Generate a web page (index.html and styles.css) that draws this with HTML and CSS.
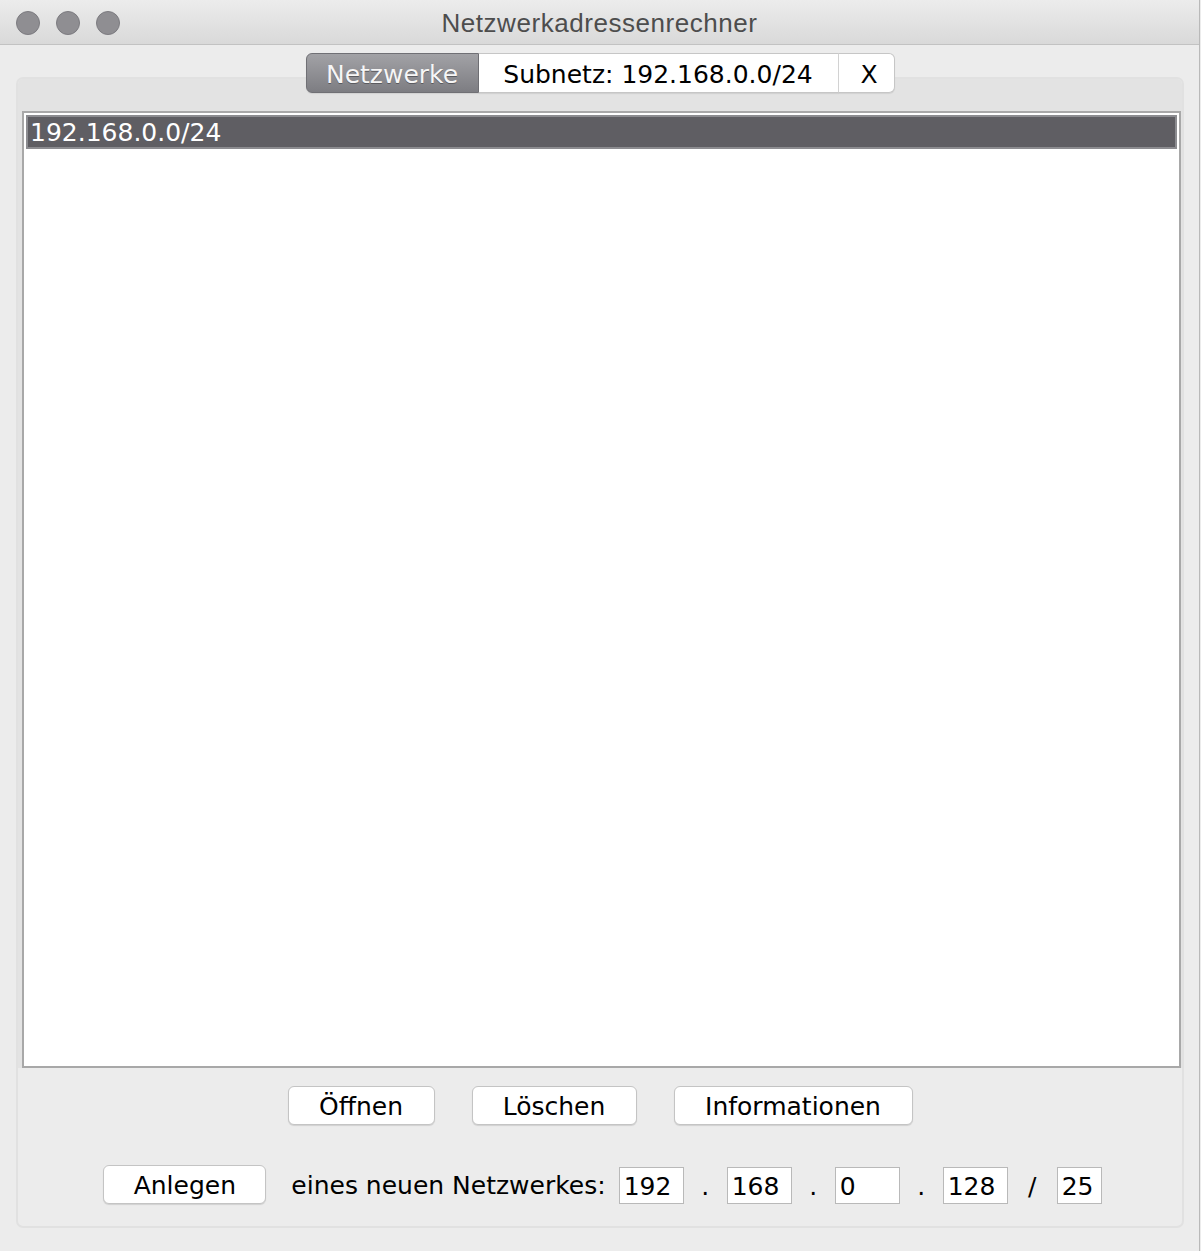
FILE: index.html
```html
<!DOCTYPE html>
<html lang="de">
<head>
<meta charset="utf-8">
<title>Netzwerkadressenrechner</title>
<link rel="stylesheet" href="styles.css">
</head>
<body>
<div class="window">
  <header class="titlebar">
    <div class="lights">
      <span class="light"></span>
      <span class="light"></span>
      <span class="light"></span>
    </div>
    <div class="title">Netzwerkadressenrechner</div>
  </header>
  <main class="main">
    <nav class="tabs">
      <div class="tab tab-active tab-first">Netzwerke</div>
      <div class="tab tab-subnet">Subnetz: 192.168.0.0/24</div>
      <div class="tab tab-close tab-last">X</div>
    </nav>
    <section class="panel">
      <div class="list-area">
        <div class="list">
          <div class="row row-selected">192.168.0.0/24</div>
        </div>
      </div>
      <div class="controls">
        <div class="btn-row">
          <button class="btn btn-open">Öffnen</button>
          <button class="btn btn-delete">Löschen</button>
          <button class="btn btn-info">Informationen</button>
        </div>
        <div class="create-row">
          <button class="btn btn-create">Anlegen</button>
          <span class="create-label">eines neuen Netzwerkes:</span>
          <span class="field">192</span>
          <span class="sep">.</span>
          <span class="field">168</span>
          <span class="sep">.</span>
          <span class="field">0</span>
          <span class="sep">.</span>
          <span class="field">128</span>
          <span class="sep sep-slash">/</span>
          <span class="field field-small">25</span>
        </div>
      </div>
    </section>
  </main>
</div>
</body>
</html>
```

FILE: styles.css
```css
* { box-sizing: border-box; }

html, body {
  margin: 0;
  padding: 0;
  background: #ececec;
}

body {
  font-family: "DejaVu Sans", "Liberation Sans", sans-serif;
  font-size: 25px;
  color: #000;
}

.window {
  width: 1200px;
  height: 1251px;
  background: #ececec;
  border-right: 1px solid #b9b9b9;
}

.titlebar {
  height: 45px;
  border-bottom: 1px solid #c2c2c2;
  background: linear-gradient(to bottom, #ececec, #d9d9d9);
  display: flex;
  align-items: center;
  position: relative;
}

.lights {
  display: flex;
  gap: 16px;
  padding-left: 16px;
  padding-top: 1px;
}

.light {
  width: 24px;
  height: 24px;
  border-radius: 50%;
  background: #8f8e92;
  border: 1px solid #7c7b80;
}

.title {
  position: absolute;
  left: 0;
  right: 0;
  top: 0;
  height: 44px;
  line-height: 47px;
  text-align: center;
  font-family: "Liberation Sans", "Open Sans", sans-serif;
  font-size: 26px;
  letter-spacing: 0.55px;
  color: #4d4d4d;
}

.main {
  padding: 8px 15px 0 16px;
}

.tabs {
  display: flex;
  justify-content: center;
  position: relative;
  z-index: 2;
  height: 40px;
}

.tab {
  height: 40px;
  line-height: 41px;
  text-align: center;
  background: #fff;
  border: 1px solid #c6c6c6;
  border-left: none;
  box-shadow: 0 1px 1px rgba(0,0,0,0.08);
  white-space: nowrap;
}

.tab-first {
  border-left: 1px solid #6f6f74;
  border-radius: 6px 0 0 6px;
}

.tab-last {
  border-radius: 0 6px 6px 0;
}

.tab-active {
  width: 173px;
  background: linear-gradient(to bottom, #a2a2a6, #7d7d82);
  border-color: #707075;
  color: #f6f6f6;
  text-shadow: 0 1px 0 #5a5a5e;
}

.tab-subnet {
  width: 360px;
  border-right-color: #d4d4d4;
}

.tab-close {
  width: 56px;
  padding-left: 6px;
}

.panel {
  margin-top: -16px;
  width: 1168px;
  height: 1151px;
  border: 2px solid #e1e1e1;
  border-radius: 7px;
  background: #ececec;
  overflow: hidden;
}

.list-area {
  background: #e3e3e3;
  padding: 32px 1px 0 4px;
}

.list {
  height: 957px;
  background: #fff;
  border: 2px solid #a8a8a8;
  padding: 2px 2px 0 2px;
}

.row {
  height: 34px;
  line-height: 32px;
  padding-left: 2px;
  white-space: nowrap;
}

.row-selected {
  background: #5f5e63;
  border: 2px solid #8c8c90;
  color: #fff;
}

.controls {
  padding-top: 18px;
  display: flex;
  flex-direction: column;
  gap: 39px;
}

.btn-row {
  display: flex;
  justify-content: center;
  gap: 37px;
}

.btn {
  height: 39px;
  font-family: inherit;
  font-size: 25px;
  color: #000;
  background: #fff;
  border: 1px solid #c4c4c4;
  border-radius: 6px;
  box-shadow: 0 1px 1px rgba(0,0,0,0.12);
  padding: 2px 0 0 0;
  line-height: 35px;
  text-align: center;
}

.btn-open { width: 147px; }
.btn-delete { width: 165px; }
.btn-info { width: 239px; }
.btn-create { width: 163px; margin-right: 25px; }

.create-row {
  display: flex;
  justify-content: center;
  align-items: center;
  padding-left: 5px;
}

.create-label {
  margin-right: 13px;
  margin-top: 3px;
  white-space: nowrap;
}

.field {
  width: 65px;
  height: 37px;
  line-height: 37px;
  background: #fff;
  border: 1px solid #b9b9b9;
  padding-left: 4px;
  margin-top: 3px;
}

.field-small { width: 45px; }

.sep {
  width: 43px;
  text-align: center;
  margin-top: 5px;
}

.sep-slash { width: 49px; }
```
